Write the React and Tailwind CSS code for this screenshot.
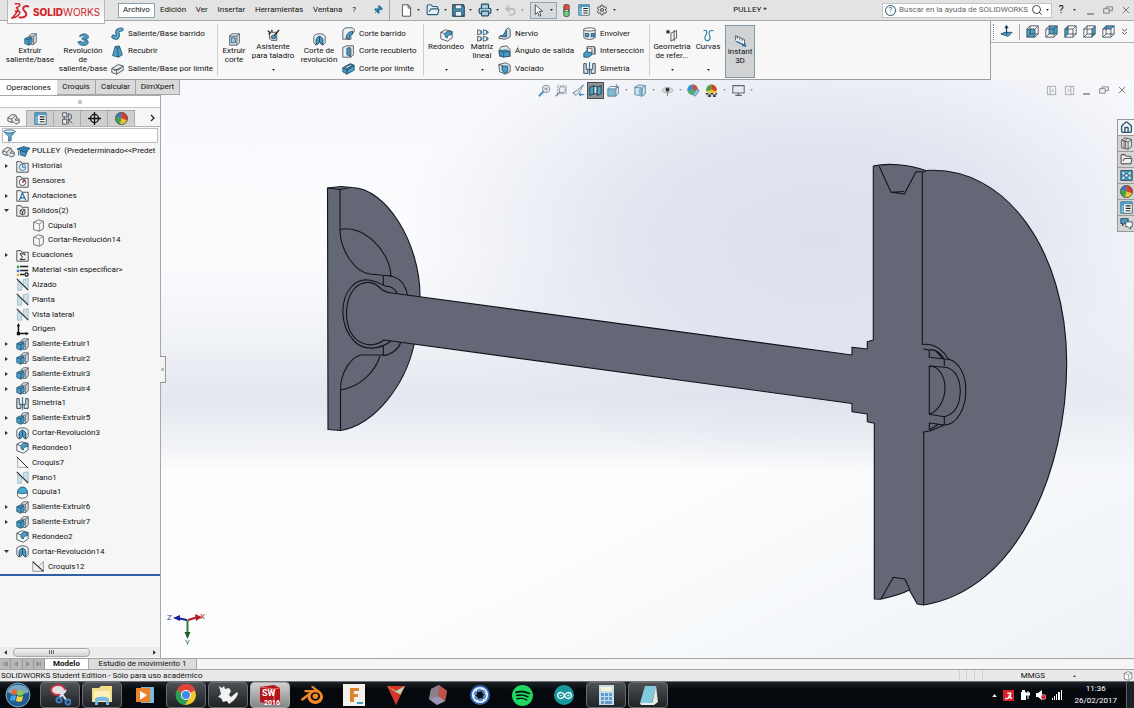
// src/App.jsx
import React, { useState } from 'react';
import { Search, Settings, Pin, Undo2, Printer, Home, FolderOpen } from 'lucide-react';
import { SiSpotify, SiArduino, SiBlender } from 'react-icons/si';

const BLUE = '#4a9dc6';
const INK = '#3b4650';

// Dibujos de 16x16 compartidos por la cinta, el árbol y las barras
const ICONS = {
  extrude: (
    <>
      <path d="M6 4l3-3h6v10l-3 3H8" fill="#eef1f3" stroke={INK} />
      <path d="M12 4v10M12 4l3-3M6 4h6" stroke={INK} fill="none" />
      <path d="M1 7l4-2 5 1v6l-4 3-5-2z" fill={BLUE} stroke="#1d4f6d" />
      <path d="M1 7l5 1 4-2M6 8v7" stroke="#1d4f6d" fill="none" />
    </>
  ),
  revolve: (
    <>
      <path d="M3 4c2-4 11-4 11 1 0 2-2 3-4 3 4 0 6 6 0 7-4 1-8-1-9-4l4-1c1 2 5 2 5 0s-4-1-4-3 3-1 3-3-4-1-5 1z" fill={BLUE} stroke="#1d4f6d" />
    </>
  ),
  sweep: (
    <>
      <path d="M3 12c5 3 6-1 5-4s1-5 5-5" fill="none" stroke="#1d4f6d" strokeWidth="5" strokeLinecap="round" />
      <path d="M3 12c5 3 6-1 5-4s1-5 5-5" fill="none" stroke="#5cabd3" strokeWidth="3" strokeLinecap="round" />
    </>
  ),
  loft: (
    <>
      <path d="M5 2l5-1 1 2 3 9-5 3-7-2z" fill={BLUE} stroke="#1d4f6d" />
      <path d="M5 2l3 2 3-1M8 4l1 11" fill="none" stroke="#1d4f6d" />
    </>
  ),
  boundary: (
    <>
      <path d="M1 8l8-5 6 2v5l-8 5-6-2z" fill="#e3e6e8" stroke={INK} />
      <path d="M1 8l6 2 8-5M7 10v5M4 11c1-3 6-1 8-3" fill="none" stroke={INK} />
    </>
  ),
  cut: (
    <>
      <path d="M2 3l3-2h9v11l-3 3H2z" fill="#e8ebed" stroke={INK} />
      <path d="M11 4v11M11 4l3-3M2 4h9" fill="none" stroke={INK} />
      <path d="M4 6h5v6H4z" fill="#9fc9de" stroke="#1d4f6d" />
    </>
  ),
  hole: (
    <>
      <path d="M3 4h9v10H5l-2-2z" fill="#dfe4e7" stroke={INK} />
      <ellipse cx="8" cy="10" rx="3" ry="2" fill={BLUE} stroke={INK} />
      <path d="M15 1l-6 7M1 2l3 3M2 6l2-1M6 1v3" stroke="#222" strokeWidth="1.6" fill="none" />
    </>
  ),
  cutRevolve: (
    <>
      <path d="M1 4c2-4 12-4 14 0v8l-3 3V8c-1-2-7-2-8 0v7l-3-3z" fill="#eef1f3" stroke={INK} />
      <path d="M4 8c1-3 2-4 4-4v7l-2 3H4zM12 8c-1-3-2-4-4-4v7l2 3h2z" fill={BLUE} stroke="#1d4f6d" />
    </>
  ),
  cutSweep: (
    <>
      <path d="M1 4l3-3h9l2 2v3l-4 3v6H1z" fill="#eef1f3" stroke={INK} />
      <path d="M5 14c0-5 3-8 8-9v4c-3 0-4 2-4 6z" fill={BLUE} stroke="#1d4f6d" />
    </>
  ),
  cutLoft: (
    <>
      <path d="M1 3l5-2h8v11l-3 3H1z" fill="#eef1f3" stroke={INK} />
      <path d="M6 4l4-1v11l-4-2z" fill={BLUE} stroke="#1d4f6d" />
      <path d="M11 4v11" stroke={INK} />
    </>
  ),
  cutBoundary: (
    <>
      <path d="M1 7l9-5 5 2v6l-9 5-5-3z" fill={BLUE} stroke="#1d4f6d" />
      <path d="M1 7l5 3 9-6M6 10v5" fill="none" stroke="#123a52" />
      <path d="M4 6l7-3 2 1-7 4z" fill="#eef1f3" stroke="#123a52" />
    </>
  ),
  fillet: (
    <>
      <path d="M1 4l6-3 8 2v8l-6 4-8-3z" fill="#f3f5f6" stroke={INK} />
      <path d="M6 7c0-3 3-5 8-4v4c-3 0-5 1-5 4-2 0-3-2-3-4z" fill={BLUE} stroke="#1d4f6d" />
      <path d="M1 4l5 2" stroke={INK} />
    </>
  ),
  pattern: (
    <g fill="#e6eef2" stroke={INK}>
      <path d="M2 1l4 1v4L2 7zM9 1l4 1v4L9 7zM2 9l4 1v4l-4 1zM9 9l4 1v4l-4 1z" />
      <path d="M6 2l1 2-1 2M13 2l2 2-2 2M6 10l1 2-1 2M13 10l2 2-2 2" fill="none" stroke="#2f7fab" strokeWidth="1.400" />
    </g>
  ),
  rib: (
    <>
      <path d="M10 3l3-2 2 2v9l-6 3-8-1 1-3 8 1z" fill="#cfdde5" stroke={INK} />
      <path d="M10 4v8l-7-1c4 0 5-4 7-7z" fill={BLUE} stroke="#1d4f6d" />
    </>
  ),
  draft: (
    <>
      <path d="M1 7l3-5 7-1 4 5v8H2z" fill="#dbe6ec" stroke={INK} />
      <path d="M2 7l8-1 4 2v6l-8 1-4-3z" fill={BLUE} stroke="#1d4f6d" />
      <path d="M2 7l5 2 7-1M7 9v6" stroke="#1d4f6d" fill="none" />
    </>
  ),
  shell: (
    <>
      <path d="M1 3l9-2 5 3v8l-6 3-7-3z" fill="#dfe8ed" stroke={INK} />
      <path d="M5 5h7v7l-4 2-3-4z" fill={BLUE} stroke="#1d4f6d" />
      <path d="M1 3l5 2" stroke={INK} />
    </>
  ),
  wrap: (
    <>
      <path d="M1 3v10c3 3 11 3 14 0V3z" fill="#e6ecef" stroke={INK} />
      <ellipse cx="8" cy="3" rx="7" ry="2" fill="#fff" stroke={INK} />
      <path d="M3 8h4v4H3zM10 8h4v4h-4z" fill={BLUE} stroke="#1d4f6d" />
    </>
  ),
  intersect: (
    <>
      <path d="M5 2h9v9H9" fill="#eef1f3" stroke={INK} />
      <path d="M5 2v5M14 2l1 2v7l-1 1" fill="none" stroke={INK} />
      <path d="M1 10l4-3 6 1v4l-4 3H1z" fill={BLUE} stroke="#1d4f6d" />
      <path d="M5 4h6v5H6z" fill="#fff" stroke={INK} />
    </>
  ),
  mirror: (
    <>
      <path d="M1 2v12h5V9H4V2zM15 2v12h-5V9h2V2z" fill="#dbe4e9" stroke={INK} strokeWidth="1.200" />
      <path d="M8 0v16" stroke="#2f7fab" strokeWidth="1.500" />
      <path d="M6 9h4" stroke={INK} />
    </>
  ),
  refGeom: (
    <>
      <path d="M6 5l7-3v9l-7 4z" fill="#eef1f3" stroke={INK} />
      <path d="M1 2h3v3H1zM10 1v14" fill="#222" stroke={INK} />
    </>
  ),
  curve: <path d="M2 2c6-2 4 4 2 7s1 6 4 5 2-4 1-7 0-6 5-5" fill="none" stroke="#2f7fab" strokeWidth="1.4" />,
  instant: (
    <>
      <path d="M2 8V2l11 5v5" fill="#fff" stroke={INK} />
      <path d="M4 3v3M7 5v3M10 6v3" stroke={INK} />
      <path d="M3 9l10 5M10 14l4 1-1-4" stroke="#256f9b" strokeWidth="1.6" fill="none" />
    </>
  ),
  file: (
    <>
      <path d="M3 1h7l3 3v11H3z" fill="#fff" stroke="#333" />
      <path d="M10 1v4h3" fill="none" stroke="#333" />
    </>
  ),
  save: (
    <>
      <path d="M1 1h13l1 2v12H1z" fill={BLUE} stroke="#1c3646" strokeWidth="1.4" />
      <path d="M4 1h8v5H4zM4 9h8v6H4z" fill="#e9eff2" stroke="#1c3646" />
    </>
  ),
  cursor: <path d="M4 1v12l3-3 2 5 2-1-2-5h4z" fill="#fff" stroke="#333" />,
  traffic: (
    <>
      <rect x="4" y="0" width="8" height="16" rx="3" fill="#5d5d5d" />
      <circle cx="8" cy="4" r="3" fill="#e64a37" />
      <circle cx="8" cy="12" r="3" fill="#5fd37e" />
      <path d="M6 8h4" stroke="#eee" />
    </>
  ),
  sheet: (
    <>
      <path d="M1 1h14v14H1z" fill="#fff" stroke="#2a4d63" />
      <path d="M1 1h14v3H1zM1 4h4v11H1z" fill={BLUE} />
      <path d="M7 6h6M7 9h6M7 12h6" stroke="#222" strokeWidth="1.4" />
      <path d="M2 7h2M2 10h2M2 13h2" stroke="#fff" />
    </>
  ),
  part: (
    <>
      <path d="M1 7l5-4 5 1 1 3 3 2v4l-4 2-3-3-2 1-5-2z" fill="#e9ebec" stroke={INK} />
      <path d="M1 7l5 2 5-5M6 9v4M12 7l-2 3 5 0" fill="none" stroke={INK} />
    </>
  ),
  cap: (
    <>
      <path d="M4 7v5l6 2 3-7" fill={BLUE} stroke="#16455f" />
      <path d="M0 5l8-3 8 2-6 5z" fill="#2f86b5" stroke="#16455f" />
      <path d="M2 7v6" stroke="#16455f" />
    </>
  ),
  config: (
    <>
      <path d="M2 1h5v5H2zM2 9h5v6H2z" fill="#e6e8ea" stroke={INK} />
      <path d="M9 2l4 2v4l-4 2M4 6v3M9 9l5 5M9 2v13" stroke={INK} fill="none" />
    </>
  ),
  target: (
    <>
      <circle cx="8" cy="8" r="5" fill="none" stroke="#111" strokeWidth="1.6" />
      <path d="M8 0v16M0 8h16" stroke="#111" strokeWidth="1.6" />
    </>
  ),
  ball: (
    <>
      <circle cx="8" cy="8" r="7.500" fill="#e8c53a" />
      <path d="M8 8V.5A7.500 7.500 0 0 0 1 6z" fill="#3a78d0" />
      <path d="M8 8V.5A7.500 7.500 0 0 1 15 10z" fill="#d93b2f" />
      <path d="M8 8L1 6a7.500 7.500 0 0 0 5 9z" fill="#3fa34d" />
      <circle cx="8" cy="8" r="7.500" fill="none" stroke="#444" />
    </>
  ),
  appearance: (
    <>
      <circle cx="7" cy="7" r="6.500" fill="#4caf6a" />
      <path d="M7 7V.5A6.500 6.500 0 0 0 1 9z" fill="#3f8fd6" />
      <path d="M7 7V.5A6.500 6.500 0 0 1 13 9z" fill="#dd4a3e" />
      <path d="M15 8l-5 7-3-2 5-7z" fill="#8fc5df" stroke="#4b7c94" />
    </>
  ),
  scene: (
    <>
      <circle cx="8" cy="7" r="6.500" fill="#e8c53a" />
      <path d="M8 7V.5A6.500 6.500 0 0 0 2 9z" fill="#3fa34d" />
      <path d="M8 7V.5A6.500 6.500 0 0 1 14 9z" fill="#d93b2f" />
      <path d="M1 11h14v5H1z" fill="#ddd" />
      <path d="M1 11h3v2H1zM7 11h3v2H7zM4 13h3v3H4zM10 13h3v3h-3zM13 11h2v2h-2z" fill="#333" />
    </>
  ),
  funnel: (
    <>
      <path d="M1 3l6 6v6l3-1V9l5-6z" fill="#67b4d8" stroke="#1f5877" />
      <ellipse cx="8" cy="3" rx="7" ry="2" fill="#dceef6" stroke="#1f5877" />
    </>
  ),
  history: (
    <>
      <path d="M1 2h5l1 2h8v11H1z" fill="#f2f3f4" stroke="#333" />
      <circle cx="8" cy="9" r="4" fill="#d4eaf5" stroke="#1f6d99" />
      <path d="M8 6v3h3" fill="none" stroke="#1f6d99" />
    </>
  ),
  sensor: (
    <>
      <path d="M1 2h5l1 2h8v11H1z" fill="#f2f3f4" stroke="#333" />
      <circle cx="8" cy="9" r="4" fill="#fff" stroke="#333" />
      <path d="M8 9l3-3" stroke="#c4282d" strokeWidth="2" />
    </>
  ),
  notes: (
    <>
      <path d="M1 2h5l1 2h8v11H1z" fill="#f2f3f4" stroke="#333" />
      <path d="M4 14L8 5l4 9M6 11h4" fill="none" stroke="#1f6d99" strokeWidth="1.500" />
    </>
  ),
  solids: (
    <>
      <path d="M1 2h5l1 2h8v11H1z" fill="#f2f3f4" stroke="#333" />
      <path d="M5 8l3-2 3 1v5l-3 1-3-1zM5 8l3 1 3-2M8 9v4" fill="#ddd" stroke="#333" />
    </>
  ),
  body: (
    <>
      <path d="M2 4l6-3 6 2v9l-5 3-7-2z" fill="#fafafa" stroke="#555" />
      <path d="M2 4l7 2 5-3M9 6v9" fill="none" stroke="#777" />
    </>
  ),
  sigma: (
    <>
      <path d="M1 2h5l1 2h8v11H1z" fill="#f2f3f4" stroke="#333" />
      <path d="M11 8V6H5l3 4-3 3h6v-1" fill="none" stroke="#222" strokeWidth="1.200" />
    </>
  ),
  material: (
    <>
      <path d="M5 3h10M5 8h10M5 13h5" stroke="#222" strokeWidth="1.800" />
      <path d="M1 2h3v3H1z" fill="#3fa34d" />
      <path d="M1 7h3v3H1z" fill="#3a78d0" />
      <path d="M1 12h3v3H1z" fill="#d8b52f" />
      <circle cx="13" cy="13" r="2" fill="#fff" stroke="#111" strokeWidth="1.500" />
    </>
  ),
  plane: (
    <>
      <path d="M2 4l5 4v7H2zM9 2l6-1v13l-6-6z" fill="#cbe0ea" stroke="#9bb9c7" />
      <path d="M1 1l14 14" stroke="#222" strokeWidth="1.300" />
    </>
  ),
  origin: (
    <>
      <path d="M3 2v11h11" fill="none" stroke="#111" strokeWidth="1.800" />
      <path d="M1 4l2-4 2 4zM12 11l4 2-4 2zM1 11h4v4H1z" fill="#111" />
    </>
  ),
  sketch: (
    <>
      <path d="M2 1v13h13" fill="none" stroke="#999" />
      <path d="M1 1l14 14" stroke="#222" strokeWidth="1.200" />
    </>
  ),
  sketchBox: (
    <>
      <path d="M1 2v12h13V2L8 8" fill="#eef0f1" stroke="#888" />
      <path d="M1 2l13 12" stroke="#222" strokeWidth="1.300" />
    </>
  ),
  dome: (
    <>
      <path d="M2 7v5c2 4 10 4 12 0V7z" fill="#fff" stroke="#333" />
      <path d="M2 8c0-9 12-9 12 0-2 2-10 2-12 0z" fill="#47a9cc" stroke="#1d4f6d" />
    </>
  ),
  zoomFit: (
    <>
      <circle cx="10" cy="6" r="4.500" fill="#e8eef2" stroke="#6b7a85" />
      <path d="M7 9l-6 6" stroke="#4d95bb" strokeWidth="2.400" />
      <path d="M8 6h4M10 4v4" stroke="#6b7a85" />
    </>
  ),
  zoomArea: (
    <>
      <path d="M3 2h11v10H3z" fill="none" stroke="#8b979f" strokeDasharray="2 1" />
      <circle cx="9" cy="7" r="4" fill="#e8eef2" stroke="#6b7a85" />
      <path d="M6 10l-5 5" stroke="#8b979f" strokeWidth="2" />
    </>
  ),
  prevView: (
    <>
      <path d="M14 1L6 8l-5 3 4 3 4-4z" fill="#dfe9ee" stroke="#66757f" />
      <path d="M9 13h6M11 11l-2 2 2 2" fill="none" stroke="#4d95bb" strokeWidth="1.500" />
    </>
  ),
  section: (
    <>
      <path d="M1 4l5-2v10l-5 2z" fill="#52a5cd" stroke="#12313f" />
      <path d="M6 3h4v9H6z" fill="#dce6ea" stroke="#12313f" />
      <path d="M10 4l5-2v10l-5 2z" fill="#52a5cd" stroke="#12313f" />
    </>
  ),
  cube: (
    <>
      <path d="M1 4l5-3 8 1v10l-4 3-9-2z" fill="#c9e2ee" stroke="#5b7b8c" />
      <path d="M6 6l4-1v10l-4-1z" fill="#7db8d4" />
      <path d="M1 4l9 1 4-3M10 5v10" fill="none" stroke="#5b7b8c" />
    </>
  ),
  orient: (
    <>
      <path d="M1 6h10v9H1z" fill="#7fb9d5" stroke="#547889" />
      <path d="M1 6l3-3h8M11 6l3-3v9l-3 3M12 0v5M10 3l2 2 3-2" fill="none" stroke="#547889" />
    </>
  ),
  eye: (
    <>
      <path d="M1 8c4-5 10-5 14 0-4 4-10 4-14 0z" fill="#e4e4e4" stroke="#999" />
      <circle cx="8" cy="7" r="2.500" fill="#333" />
      <path d="M8 10v5" stroke="#777" />
    </>
  ),
  screen: (
    <>
      <path d="M1 2h14v9H1z" fill="#e3ecf0" stroke="#666" strokeWidth="1.300" />
      <path d="M8 11v3M4 14h8" stroke="#666" strokeWidth="1.500" />
    </>
  ),
  normal: (
    <>
      <path d="M1 11l5-2h9l-5 5z" fill={BLUE} stroke="#1d4f6d" />
      <path d="M8 11V2M6 4l2-3 2 3" fill="none" stroke="#123a52" strokeWidth="1.400" />
    </>
  ),
  books: (
    <>
      <path d="M2 4l4-3 8 2v9l-4 3-8-2z" fill="#e7e7e7" stroke="#444" />
      <path d="M2 4l8 2 4-3M10 6v9M5 5v9M7 5v9M9 2L5 5" fill="none" stroke="#444" />
    </>
  ),
  views: (
    <>
      <path d="M1 2h14v12H1z" fill={BLUE} stroke="#234" />
      <path d="M3 4l3 3M13 4l-3 3M3 12l3-3M13 12l-3-3" stroke="#fff" strokeWidth="1.500" />
      <path d="M6 6h4v4H6z" fill="#fff" stroke="#234" />
    </>
  ),
  chat: (
    <>
      <path d="M1 2h9v6H5l-2 3V8H1z" fill={BLUE} stroke="#234" />
      <path d="M7 6h8v6h-2v3l-3-3H7z" fill="#fff" stroke="#345" />
    </>
  ),
  left: <path d="M2 2h12v12H2zM6 2v12M11 6L8 8l3 2" fill="none" stroke="#8a8d92" />,
  right: <path d="M2 2h12v12H2zM10 2v12M5 6l3 2-3 2" fill="none" stroke="#8a8d92" />,
  min: <path d="M3 13h10" fill="none" stroke="#777" strokeWidth="2" />,
  restore: <path d="M1 6h9v7H1zM5 6V3h10v6h-5" fill="none" stroke="#666" strokeWidth="1.200" />,
  close: <path d="M3 3l10 10M13 3L3 13" fill="none" stroke="#666" strokeWidth="1.300" />,
};

const CUBE_FACES = {
  frontal: 'M1 5h10v10H1z',
  posterior: 'M5 1h10v10H5z',
  izquierda: 'M1 5l4-4v10l-4 4z',
  derecha: 'M11 5l4-4v10l-4 4z',
  superior: 'M1 5l4-4h10l-4 4z',
};

const Icon = ({ name, className = 'size-[13px]' }) => (
  <svg viewBox="0 0 16 16" className={`shrink-0 ${className}`} aria-hidden="true">{ICONS[name]}</svg>
);

const Caret = ({ light }) => (
  <svg viewBox="0 0 4 3" className="h-[2px] w-[3px] shrink-0" aria-hidden="true">
    <path d="M0 0h4L2 3z" fill={light ? '#9a9a9a' : '#222'} />
  </svg>
);

const MENU = ['Edición', 'Ver', 'Insertar', 'Herramientas', 'Ventana', '?'];

const QUICK = [
  { label: 'Nuevo', icon: <Icon name="file" /> },
  { label: 'Abrir', icon: <FolderOpen className="size-[14px] text-[#2c5e7a]" fill="#e4eef3" strokeWidth={2} /> },
  { label: 'Guardar', icon: <Icon name="save" /> },
  { label: 'Imprimir', icon: <Printer className="size-[14px] text-[#234a61]" fill="#a8cfe2" strokeWidth={2} /> },
  { label: 'Deshacer', icon: <Undo2 className="size-[13px] text-[#b9bbbd]" strokeWidth={3} />, light: true },
];

const WindowButtons = ({ className = '' }) => (
  <div className={`flex items-center ${className}`}>
    <button type="button" aria-label="Minimizar" className="flex w-[17px] justify-center"><Icon name="min" className="size-[11px]" /></button>
    <button type="button" aria-label="Restaurar" className="flex w-[18px] justify-center"><Icon name="restore" className="size-[10px]" /></button>
    <button type="button" aria-label="Cerrar" className="flex w-[17px] justify-center"><Icon name="close" className="size-[10px]" /></button>
  </div>
);

const TitleBar = () => (
  <header className="relative flex h-[21px] shrink-0 items-center border-b border-[#a9a9a9] bg-[#e3e3e3] pl-[118px]">
    {/* El logo cuelga por encima de la cinta */}
    <div className="absolute left-[7px] top-0 z-10 flex h-6 w-[98px] items-center border border-t-0 border-[#b5b5b5] bg-linear-to-b from-[#e9e9e9] to-white pl-[3px]">
      <svg viewBox="0 0 20 18" className="h-[17px] w-[19px] shrink-0" fill="none" stroke="#d2232a" strokeWidth="1.6" aria-label="DS">
        <path d="M4 1c4-1 6 0 5 2-1 1-3 2-4 2 4 0 2 5-4 11 6-1 9-5 8-7-1-1-3-1-5 0" />
        <path d="M19 4c-3-2-7 0-6 3 1 2 4 3 3 6-1 2-5 3-8 2" strokeWidth="2" />
      </svg>
      <span className="ml-[3px] font-[Inter,sans-serif] text-[10px] text-[#d2232a]"><b className="font-extrabold">SOLID</b><span>WORKS</span></span>
    </div>
    <button type="button" className="h-[15px] w-[37px] border border-[#8ba3ae] bg-white">Archivo</button>
    <nav className="flex w-[206px] shrink-0 items-center justify-between px-[5px]">
      {MENU.map(item => <button key={item} type="button">{item}</button>)}
    </nav>
    <button type="button" aria-label="Fijar menú" className="ml-3"><Pin className="size-[10px] rotate-45 text-[#2f7ba3]" fill="#2f7ba3" /></button>
    <div className="ml-[6px] h-5 w-px bg-[#a4a4a4]" />
    <div className="flex items-center pl-[10px]">
      {QUICK.map(q => (
        <button key={q.label} type="button" aria-label={q.label} className="flex w-[26px] items-center gap-1">
          {q.icon}
          <Caret light={q.light} />
        </button>
      ))}
      <button type="button" aria-label="Seleccionar" className="flex h-[17px] w-[27px] items-center gap-[5px] border border-[#95a5ad] bg-[#d5dbde] pl-px">
        <Icon name="cursor" />
        <Caret />
      </button>
      <button type="button" aria-label="Reconstruir" className="flex w-[18px] justify-center"><Icon name="traffic" /></button>
      <button type="button" aria-label="Propiedades" className="flex w-[17px] justify-center"><Icon name="sheet" className="size-3" /></button>
      <button type="button" aria-label="Opciones" className="flex w-[26px] items-center gap-[5px] pl-1"><Settings className="size-3 text-[#444]" /><Caret /></button>
    </div>
    <h1 className="flex-1 text-center">PULLEY *</h1>
    <div className="flex h-[15px] w-[170px] items-center gap-[3px] border border-[#c4c4c4] bg-white px-[2px]">
      <span className="flex size-[11px] shrink-0 items-center justify-center rounded-full border border-[#28556e] text-[#28556e]">?</span>
      <input type="text" aria-label="Buscar en la ayuda" placeholder="Buscar en la ayuda de SOLIDWORKS" className="w-0 flex-1 outline-none placeholder:text-[#666]" />
      <Search className="size-3 shrink-0 text-[#444]" />
      <Caret />
    </div>
    <button type="button" aria-label="Ayuda" className="flex w-[30px] items-center justify-center gap-[9px] text-[11px]">?<Caret /></button>
    <WindowButtons />
  </header>
);

const BigButton = ({ icon, lines, caret, width, top }) => (
  <button type="button" className={`flex h-full flex-col items-center whitespace-nowrap ${width} ${top ? 'pt-2' : 'pt-3'}`}>
    <Icon name={icon} />
    {lines.map(line => <span key={line} className="leading-[9px]">{line}</span>)}
    {caret && <span className="mt-auto flex pb-2"><Caret /></span>}
  </button>
);

const ToolList = ({ items, className }) => (
  <div className={`flex flex-col justify-between pb-1 pt-[6px] ${className}`}>
    {items.map(([icon, label]) => (
      <button key={label} type="button" className="flex items-center gap-1 whitespace-nowrap">
        <Icon name={icon} />
        {label}
      </button>
    ))}
  </div>
);

const Divider = () => <div className="my-[3px] w-px shrink-0 bg-[#cfcfcf]" />;

const Ribbon = () => (
  <div className="flex h-[59px] shrink-0 bg-[#f7f7f7]">
    <div className="flex flex-1 border-b border-r border-[#9d9d9d]">
      <BigButton icon="extrude" width="w-[60px]" lines={['Extruir', 'saliente/base']} />
      <BigButton icon="revolve" width="w-[46px]" lines={['Revolución', 'de', 'saliente/base']} />
      <ToolList className="w-[111px] pl-[5px]" items={[['sweep', 'Saliente/Base barrido'], ['loft', 'Recubrir'], ['boundary', 'Saliente/Base por límite']]} />
      <Divider />
      <BigButton icon="cut" width="w-8" lines={['Extruir', 'corte']} />
      <BigButton icon="hole" width="w-[46px]" lines={['Asistente', 'para taladro']} caret top />
      <BigButton icon="cutRevolve" width="w-[46px]" lines={['Corte de', 'revolución']} />
      <ToolList className="w-[81px]" items={[['cutSweep', 'Corte barrido'], ['cutLoft', 'Corte recubierto'], ['cutBoundary', 'Corte por límite']]} />
      <Divider />
      <BigButton icon="fillet" width="w-11" lines={['Redondeo']} caret top />
      <BigButton icon="pattern" width="w-7" lines={['Matriz', 'lineal']} caret top />
      <ToolList className="w-[87px] pl-[2px]" items={[['rib', 'Nervio'], ['draft', 'Ángulo de salida'], ['shell', 'Vaciado']]} />
      <ToolList className="w-[66px]" items={[['wrap', 'Envolver'], ['intersect', 'Intersección'], ['mirror', 'Simetría']]} />
      <Divider />
      <BigButton icon="refGeom" width="w-11" lines={['Geometría', 'de refer...']} caret top />
      <BigButton icon="curve" width="w-7" lines={['Curvas']} caret top />
      <div className="mb-px ml-[3px] mt-1 border border-[#7f99a6] bg-[#d0d2d4]">
        <BigButton icon="instant" width="w-7" lines={['Instant', '3D']} top />
      </div>
    </div>
    <div className="w-[143px]">
      <div className="flex h-[22px] items-center justify-between border-b border-[#b3b3b3] pl-[2px] pr-[6px]">
        <div className="h-4 border-l border-dotted border-[#888]" />
        <button type="button" aria-label="Normal a"><Icon name="normal" /></button>
        <div className="h-4 w-px bg-[#aaa]" />
        {Object.entries(CUBE_FACES).map(([name, face]) => (
          <button key={name} type="button" aria-label={`Vista ${name}`}>
            <svg viewBox="0 0 16 16" className="size-[13px]" aria-hidden="true">
              <path d={face} fill={BLUE} />
              <path d="M1 5h10v10H1zM5 1h10v10H5zM1 5l4-4M11 5l4-4M1 15l4-4M11 15l4-4" fill="none" stroke="#3b4b55" />
            </svg>
          </button>
        ))}
        <button type="button" aria-label="Más vistas">
          <svg viewBox="0 0 8 10" className="h-2 w-[7px]" fill="none" stroke="#333"><path d="M1 1l3 3 3-3M1 5l3 3 3-3" /></svg>
        </button>
      </div>
    </div>
  </div>
);

const HEADS_UP = [
  ['zoomFit', 'Zoom para ajustar'],
  ['zoomArea', 'Zoom encuadre'],
  ['prevView', 'Vista previa'],
  ['section', 'Vista de sección', 'active'],
  ['orient', 'Orientación de vista', 'caret'],
  ['cube', 'Estilo de visualización', 'caret'],
  ['eye', 'Ocultar o mostrar elementos', 'caret'],
  ['appearance', 'Editar apariencia'],
  ['scene', 'Aplicar escena', 'caret'],
  ['screen', 'Configuración de visualización', 'caret'],
];

const CommandTabs = () => {
  const [active, setActive] = useState('Operaciones');
  const tabs = [['Operaciones', 'w-[57px]'], ['Croquis', 'w-[39px]'], ['Calcular', 'w-10'], ['DimXpert', 'w-11']];

  return (
    <div className="flex h-[15px] shrink-0 items-stretch">
      <div className="flex bg-white">
        {tabs.map(([name, width]) => (
          <button
            key={name}
            type="button"
            onClick={() => setActive(name)}
            className={`${width} ${active === name ? 'bg-white' : 'border-b border-r border-[#a5a5a5] bg-[#d9d9d9]'}`}
          >
            {name}
          </button>
        ))}
      </div>
      <div className="flex h-5 flex-1 items-center justify-center pl-[70px]">
        {HEADS_UP.map(([icon, label, mode]) => (
          <button
            key={label}
            type="button"
            aria-label={label}
            className={`flex h-[17px] items-center justify-center gap-[5px] ${mode === 'caret' ? 'w-[27px]' : 'w-[17px]'} ${mode === 'active' ? 'border border-[#4a4e52] bg-[#8d9194]' : ''}`}
          >
            <Icon name={icon} />
            {mode === 'caret' && <Caret light />}
          </button>
        ))}
      </div>
      <div className="flex h-5 items-center">
        <button type="button" aria-label="Panel izquierdo" className="flex w-[18px] justify-center"><Icon name="left" className="size-[11px]" /></button>
        <button type="button" aria-label="Panel derecho" className="flex w-[18px] justify-center"><Icon name="right" className="size-[11px]" /></button>
        <WindowButtons className="pr-1" />
      </div>
    </div>
  );
};

const TREE = [
  ['history', 'Historial', 'closed'],
  ['sensor', 'Sensores'],
  ['notes', 'Anotaciones', 'closed'],
  ['solids', 'Sólidos(2)', 'open'],
  ['body', 'Cúpula1', '', true],
  ['body', 'Cortar-Revolución14', '', true],
  ['sigma', 'Ecuaciones', 'closed'],
  ['material', 'Material <sin especificar>'],
  ['plane', 'Alzado'],
  ['plane', 'Planta'],
  ['plane', 'Vista lateral'],
  ['origin', 'Origen'],
  ['extrude', 'Saliente-Extruir1', 'closed'],
  ['extrude', 'Saliente-Extruir2', 'closed'],
  ['extrude', 'Saliente-Extruir3', 'closed'],
  ['extrude', 'Saliente-Extruir4', 'closed'],
  ['mirror', 'Simetría1'],
  ['extrude', 'Saliente-Extruir5', 'closed'],
  ['cutRevolve', 'Cortar-Revolución3', 'closed'],
  ['fillet', 'Redondeo1'],
  ['sketch', 'Croquis7'],
  ['plane', 'Plano1'],
  ['dome', 'Cúpula1'],
  ['extrude', 'Saliente-Extruir6', 'closed'],
  ['extrude', 'Saliente-Extruir7', 'closed'],
  ['fillet', 'Redondeo2'],
  ['cutRevolve', 'Cortar-Revolución14', 'open'],
  ['sketchBox', 'Croquis12', '', true],
];

const PANEL_TABS = [['part', 'Árbol de operaciones'], ['sheet', 'Propiedades'], ['config', 'Configuraciones'], ['target', 'DimXpert'], ['ball', 'Apariencias']];

const FeatureTree = () => (
  <aside className="relative flex w-[161px] shrink-0 flex-col border-r border-t border-[#a8a8a8] bg-[#f6f6f7]">
    <div className="flex h-3 items-center justify-center border-b border-[#c9c9c9] bg-white">
      <span className="size-1 rounded-full border border-[#999]" />
    </div>
    <div className="mt-[2px] flex h-[17px] shrink-0 items-stretch border-b border-[#b3b3b3]">
      {PANEL_TABS.map(([icon, label], i) => (
        <button key={label} type="button" aria-label={label} className={`flex w-[27px] items-center justify-center border-r border-[#aaa] ${i === 0 ? '' : 'border-t bg-[#cfcfcf]'}`}>
          <Icon name={icon} />
        </button>
      ))}
      <button type="button" aria-label="Más" className="flex flex-1 items-center justify-end pr-1">
        <svg viewBox="0 0 6 8" className="h-2 w-[6px]" fill="none" stroke="#222" strokeWidth="1.3"><path d="M1 1l3 3-3 3" /></svg>
      </button>
    </div>
    <label className="mx-[2px] mt-px flex h-[15px] shrink-0 items-center border border-[#bdbdbd] bg-white">
      <Icon name="funnel" />
      <input type="text" aria-label="Filtro" className="w-0 flex-1 outline-none" />
    </label>
    <ul className="mt-px grid h-[432px] shrink-0 auto-rows-fr border-b-2 border-[#2f5fa5]">
      <li className="flex items-center gap-[2px] whitespace-nowrap pl-[2px]">
        <Icon name="part" />
        <Icon name="cap" />
        <span className="whitespace-pre">PULLEY  (Predeterminado&lt;&lt;Predet</span>
      </li>
      {TREE.map(([icon, label, state, child], i) => (
        <li key={i} className={`flex items-center gap-[3px] whitespace-nowrap ${child ? 'pl-8' : 'pl-1'}`}>
          {!child && (
            <svg viewBox="0 0 6 6" className="mr-[3px] size-[6px] shrink-0" fill="#333" aria-hidden="true">
              {state === 'closed' && <path d="M1 1l3 2-3 2z" />}
              {state === 'open' && <path d="M0 1h5L2.500 4z" />}
            </svg>
          )}
          <Icon name={icon} />
          <span>{label}</span>
        </li>
      ))}
    </ul>
    <div className="mb-px mt-auto flex h-[10px] items-center justify-between bg-[#ececec] px-1">
      <svg viewBox="0 0 4 6" className="h-[5px] w-[3px]" fill="#333"><path d="M4 0v6L0 3z" /></svg>
      <div className="ml-1 flex h-[9px] w-[77px] items-center justify-center gap-px rounded-sm border border-[#a9a9a9] bg-linear-to-b from-[#f4f4f4] to-[#d2d2d2]">
        <i className="h-1 w-px bg-[#666]" /><i className="h-1 w-px bg-[#666]" /><i className="h-1 w-px bg-[#666]" />
      </div>
      <svg viewBox="0 0 4 6" className="ml-[62px] h-[5px] w-[3px]" fill="#333"><path d="M0 0v6l4-3z" /></svg>
    </div>
    <button type="button" aria-label="Ocultar panel" className="absolute left-full top-[260px] flex h-[27px] w-[6px] items-center justify-center border border-l-0 border-[#999] bg-[#f3f3f3]">
      <span className="size-[3px] rounded-full border border-[#888]" />
    </button>
  </aside>
);

const Model = () => (
  <svg viewBox="0 80 1134 578" preserveAspectRatio="xMidYMid slice" className="absolute inset-0 size-full" role="img" aria-label="Sección de la polea">
    <defs>
      <linearGradient id="sky" x1="0" y1="0" x2="0" y2="1">
        <stop offset="0" stopColor="#f8f9fd" />
        <stop offset=".3" stopColor="#fcfcfe" />
        <stop offset=".42" stopColor="#f3f5f9" />
        <stop offset=".55" stopColor="#e4e7ef" />
        <stop offset=".63" stopColor="#f0f2f6" />
        <stop offset=".68" stopColor="#fdfdfd" />
        <stop offset="1" stopColor="#fcfdfd" />
      </linearGradient>
      <radialGradient id="haze" cx="0" cy="0" r="1" gradientUnits="userSpaceOnUse" gradientTransform="translate(820 240) scale(420 230)">
        <stop offset="0" stopColor="#dbe0ec" />
        <stop offset=".45" stopColor="#dbe0ec" stopOpacity=".8" />
        <stop offset="1" stopColor="#dbe0ec" stopOpacity="0" />
      </radialGradient>
      <linearGradient id="corner" x1="0" y1="0" x2="1" y2="1">
        <stop offset=".65" stopColor="#eef2f8" stopOpacity="0" />
        <stop offset="1" stopColor="#eef2f7" />
      </linearGradient>
    </defs>
    <rect x="0" y="80" width="1134" height="578" fill="url(#sky)" />
    <rect x="0" y="80" width="1134" height="578" fill="url(#haze)" />
    <rect x="0" y="80" width="1134" height="578" fill="url(#corner)" />

    <g fill="#646876" stroke="#12141c" strokeWidth="1.1" strokeLinejoin="round">
      {/* disco pequeño */}
      <path d="M327.500 188L341 186.500L352 187.500C386 188 420 243 420 296L414 345C405 385 375 425 340.500 430.500L328 429.500Z" />
      <path d="M327.500 188L340 189.500L350 187.500M340 189.500V232C341 250 354 272 370 274L391 276C390 250 362 224 340 229.500" />
      <path d="M383.300 275.500V287M388 275.500C400 277 406 285 407.500 296" fill="none" />
      <path d="M340.500 390V430M340.500 390C340 374 352 352 366 355H383M380 356C375 372 360 387 340.500 390M383.300 345V355.500C391 355 398 350 401 342" />
      <path d="M391 341C381 349 365 352 354 341C340 326 339 300 352 286C362 276 374 280 385 286C392 286 395 289 397 293" />
      {/* eje y disco grande en una sola silueta */}
      <path d="M390 292.700L852 355V347.300L867.300 349V341.700L873.300 340V166C887 163 908 164 926 170.500C1005 165 1066.700 250 1066.700 363C1066.700 470 1018 590 923.500 605L917.300 604L909.300 590C900 595 890 597 880 599.300L874.300 599V423.300L867.300 421.700V414L852 411.700V403.500L384 340C370 350 356 343 350 331C344 317 346 299 354 289C363 279 374 282 379 287Q384 292 390 292.700Z" />
      <path d="M879.300 166.500L891 192.300L904.300 194L916 171.700H926M891 192.300L904 191.500M922.300 171.700V344.500M923.700 431.500V605" fill="none" />
      <path d="M881 599L893.300 577.300L905 579L910 590" fill="none" />
      {/* cubo */}
      <path d="M922.300 344.500C934 343 943 350 949 360M923.300 349L929.300 350V357.300L944.300 359V366M929.300 350C936 349 941 354 944 359M935 350L942 358" fill="none" />
      <path d="M944.300 359C957 358 966 373 965.700 390C966 408 957 425 944.300 425L929.300 423V430M923.700 432L930 431L944.300 425M944.300 425V416.500M929.300 430L939 424" fill="none" />
      <path d="M929.300 366L947 367.500C957 371 960 381 960.300 391C960 404 955 414 944.300 416.700L929.300 414.300Z" />
      <path d="M929.300 366C940 366 945 378 945 388C945 399 939 411 929.300 414.300" fill="none" />
    </g>

    {/* triada de ejes */}
    <g strokeWidth="2">
      <path d="M187 620L177 618" stroke="#1a1f9c" /><path d="M180 615l-7 3 7 3z" fill="#1a1f9c" />
      <path d="M188 620L198 617" stroke="#b21f2b" /><path d="M195 614l7 3-6 4z" fill="#b21f2b" />
      <path d="M187.500 620V634" stroke="#2c7d35" /><path d="M184.500 632h6l-3 7z" fill="#1f5e28" />
    </g>
    <g className="font-[Roboto,sans-serif] text-[8px]">
      <text x="167" y="620" fill="#3339a8">Z</text>
      <text x="200" y="619" fill="#b21f2b">X</text>
      <text x="185" y="645" fill="#39713f">Y</text>
    </g>
  </svg>
);

const TaskPane = () => (
  <div className="ml-auto mt-6 flex w-[17px] flex-col self-start border-l border-t border-[#999]">
    <button type="button" aria-label="Inicio" className="flex h-4 items-center justify-center border-b border-[#999] bg-[#f4f4f4]"><Home className="size-[13px] text-[#24566f]" strokeWidth={2.500} /></button>
    <button type="button" aria-label="Biblioteca" className="flex h-4 items-center justify-center border-b border-[#999] bg-[#d4d4d4]"><Icon name="books" /></button>
    <button type="button" aria-label="Explorador" className="flex h-4 items-center justify-center border-b border-[#999] bg-[#d4d4d4]"><FolderOpen className="size-[13px] text-[#555]" fill="#eee" /></button>
    {[['views', 'Paleta de vistas'], ['ball', 'Apariencias'], ['sheet', 'Propiedades'], ['chat', 'Foro']].map(([icon, label]) => (
      <button key={label} type="button" aria-label={label} className="flex h-4 items-center justify-center border-b border-[#999] bg-[#d4d4d4]"><Icon name={icon} /></button>
    ))}
  </div>
);

const ModelTabs = () => (
  <div className="flex h-3 shrink-0 items-stretch border-y border-[#a3a3a3] bg-[#f5f5f5]">
    <div className="flex w-[45px] items-stretch">
      {['M7 1L3 4l4 3zM2 1v6', 'M6 1L2 4l4 3z', 'M2 1l4 3-4 3z', 'M1 1l4 3-4 3zM6 1v6'].map(d => (
        <button key={d} type="button" aria-label="Desplazar pestañas" className="flex flex-1 items-center justify-center border-r border-[#999] bg-[#b9b9b9]">
          <svg viewBox="0 0 8 8" className="size-[6px]" fill="#999" stroke="#888"><path d={d} /></svg>
        </button>
      ))}
    </div>
    <button type="button" className="w-[43px] bg-white font-bold leading-[10px]">Modelo</button>
    <button type="button" className="w-[109px] border-x border-[#aaa] bg-[#dcdcdc] leading-[10px]">Estudio de movimiento 1</button>
  </div>
);

const StatusBar = () => (
  <footer className="flex h-[11px] shrink-0 items-center bg-[#e9e9e9] pl-px pr-px leading-[11px]">
    <span>SOLIDWORKS Student Edition - Sólo para uso académico</span>
    <div className="ml-auto mr-[38px] flex h-full w-6 justify-between">
      <i className="w-px bg-[#d3d3d3]" /><i className="w-px bg-[#d3d3d3]" /><i className="w-px bg-[#d3d3d3]" /><i className="w-px bg-[#d3d3d3]" />
    </div>
    <span>MMGS</span>
    <svg viewBox="0 0 4 3" className="ml-7 mr-[47px] h-[2px] w-[3px]" fill="#333"><path d="M0 3h4L2 0z" /></svg>
    <Icon name="body" className="size-[10px]" />
  </footer>
);

const APPS = [
  { name: 'Recortes', open: true, art: <><ellipse cx="9" cy="6" rx="7" ry="5" fill="#e9dfe2" stroke="#c6344a" strokeWidth="2" /><path d="M10 6l8 11M17 6l-7 8" stroke="#dfe6ee" strokeWidth="2" /><circle cx="10" cy="16" r="2.500" fill="none" stroke="#3d7fc4" strokeWidth="2" /><circle cx="19" cy="18" r="2.500" fill="none" stroke="#3d7fc4" strokeWidth="2" /></> },
  { name: 'Explorador', open: true, art: <><path d="M1 4h7l2-2h11v16H1z" fill="#f3dd8c" /><path d="M3 7h16v11H3z" fill="#fbf0bb" /><path d="M4 21v-6c0-3 14-3 14 0v6h-3v-4H7v4z" fill="#78b9e4" /></> },
  { name: 'Reproductor', art: <><path d="M8 3h13v16H8z" fill="#7db8dc" /><path d="M3 4h14v14H3z" fill="#e9822b" /><path d="M7 7l7 4-7 5z" fill="#fff" /></> },
  { name: 'Chrome', open: true, art: <><circle cx="11" cy="11" r="10" fill="#f3c72d" /><path d="M11 11L2 6a10 10 0 0 1 18.500 0z" fill="#dc4437" /><path d="M11 11L2 6a10 10 0 0 0 8 15l5-8z" fill="#2b9f58" /><circle cx="11" cy="11" r="5" fill="#fff" /><circle cx="11" cy="11" r="4" fill="#4587ee" /></> },
  { name: 'Rhinoceros', open: true, art: <path d="M2 2l3 2 2-2 1 3 4-1 2 3-2 4 2 2 6-5 1 2c-2 5-6 8-9 10l-2-3-4 1-2-4-3-1 3-3z" fill="#f2f2f2" /> },
  { name: 'SOLIDWORKS 2016', active: true, art: <><path d="M1 3l14-2 6 3v15l-6 2-14-3z" fill="#b3141b" /><path d="M1 3l14 2 6-1M15 5v16" stroke="#e66" fill="none" /><text x="3" y="12" fontSize="9" fontWeight="700" fill="#fff">SW</text><text x="5" y="21" fontSize="7" fontWeight="700" fill="#fff">2016</text></> },
  { name: 'Blender', node: <SiBlender className="size-[22px] text-[#f0872a]" /> },
  { name: 'Fusion 360', art: <><path d="M0 0h22v22H0z" fill="#f4f0ea" /><path d="M7 18V4h9v3h-5v3h4v3h-4v5z" fill="#dd8431" /><path d="M14 18h6v2h-6z" fill="#3aa4bd" /></> },
  { name: 'Vectary', art: <><path d="M2 2h18l-9 19z" fill="#d5372b" /><path d="M2 2l9 5 9-5-5 9z" fill="#b7d8b4" /><path d="M9 8l6 2-4 11z" fill="#d5372b" /></> },
  { name: 'Modelador', art: <><path d="M4 5l8-4 8 6-2 10-8 4-8-6z" fill="#7a6b80" /><path d="M12 1l8 6-2 10-7-5z" fill="#c05347" /><path d="M2 15l9-3 7 5-8 4z" fill="#9d93b4" /><path d="M4 5l8-4-1 11-9 3z" fill="#8c8090" /></> },
  { name: 'Cámara', art: <><circle cx="11" cy="11" r="9" fill="#fff" stroke="#2f6cb8" strokeWidth="2" /><circle cx="11" cy="11" r="5" fill="#0b111a" stroke="#5b93d2" strokeWidth="3" strokeDasharray="4 1" /></> },
  { name: 'Spotify', node: <SiSpotify className="size-[21px] text-[#1ed760]" /> },
  { name: 'Arduino', node: <span className="flex size-5 items-center justify-center rounded-full bg-[#17979e]"><SiArduino className="size-[15px] text-white" /></span> },
  { name: 'Calculadora', open: true, art: <><path d="M4 1h15v20H4z" fill="#c5dcee" /><path d="M6 3h11v4H6z" fill="#f7f3d7" /><path d="M6 9h3v3H6zM10 9h3v3h-3zM14 9h3v3h-3zM6 13h3v3H6zM10 13h3v3h-3zM14 13h3v3h-3zM6 17h3v3H6zM10 17h7v3h-7z" fill="#5f9ccc" /></> },
  { name: 'Bloc de notas', open: true, art: <><path d="M8 2h11l-4 17H3z" fill="#83cbdc" /><path d="M19 2l2 16-6 2z" fill="#e7ebdf" /><path d="M3 19h12l6-1-4 3H4z" fill="#e9efec" /></> },
];

const Taskbar = () => (
  <div className="flex h-[27px] shrink-0 items-center border-t border-[#6b7176] bg-linear-to-b from-[#1d2227] to-[#05090e] to-30% text-white">
    <button type="button" aria-label="Inicio" className="ml-[5px] mr-[9px]">
      <svg viewBox="0 0 26 26" className="size-[26px]">
        <circle cx="13" cy="13" r="12" fill="#245e8d" stroke="#7ba7c3" />
        <path d="M2 10a12 12 0 0 1 22 0c-7 3-15 3-22 0z" fill="#9cc4da" opacity=".7" />
        <path d="M7 8c2-1 4-1 5 0l-1 5c-2-1-4-1-5 0z" fill="#ec6533" /><path d="M13 8c2 1 4 1 6 0l-1 5c-2 1-4 1-6 0z" fill="#8fc84a" />
        <path d="M6 14c2-1 4-1 5 0l-1 5c-2-1-3-1-5 0z" fill="#3eaae2" /><path d="M12 14c2 1 4 1 6 0l-1 5c-2 1-4 1-6 0z" fill="#f9cf3d" />
      </svg>
    </button>
    <div className="flex h-full gap-[2px]">
      {APPS.map(app => (
        <button
          key={app.name}
          type="button"
          aria-label={app.name}
          className={`flex w-10 items-center justify-center ${app.active ? 'rounded-sm border border-[#aaa] bg-linear-to-b from-[#d2d2d2] to-[#858585]' : app.open ? 'rounded-sm border border-[#686c70] bg-linear-to-b from-[#4d5154] to-[#1f2326]' : ''}`}
        >
          {app.node || <svg viewBox="0 0 22 22" className="size-[22px]" aria-hidden="true">{app.art}</svg>}
        </button>
      ))}
    </div>
    <div className="ml-auto flex items-center gap-[6px]">
      <svg viewBox="0 0 6 4" className="h-[3px] w-[5px]" fill="#fff"><path d="M0 4h6L3 0z" /></svg>
      <svg viewBox="0 0 10 10" className="size-[11px]"><path d="M0 0h10v10H0z" fill="#d8202c" /><path d="M2 8c3 0 5-2 5-5H4M5 5l3 3" fill="none" stroke="#fff" strokeWidth="1.300" /></svg>
      <svg viewBox="0 0 10 10" className="size-[10px]"><path d="M1 2h5v8H1zM2 0h3v2H2z" fill="#fff" /><path d="M8 1v8M6 3h4v2H6z" stroke="#fff" fill="#fff" /></svg>
      <svg viewBox="0 0 10 10" className="size-[10px]"><path d="M0 3h2l4-3v10L2 7H0z" fill="#fff" /><circle cx="7.500" cy="7" r="2.500" fill="#d8202c" stroke="#fff" strokeWidth=".5" /></svg>
      <svg viewBox="0 0 10 10" className="size-[10px]" fill="#fff"><path d="M0 8h1v2H0zM2 6h1v4H2zM4 4h1v6H4zM6 2h2v8H6zM9 0h1v10H9z" /></svg>
    </div>
    <div className="ml-3 mr-[9px] text-center leading-[12px]">
      <div>11:36</div>
      <div>26/02/2017</div>
    </div>
    <button type="button" aria-label="Mostrar escritorio" className="h-full w-2 border-l border-[#5d6368] bg-[#1b2126]" />
  </div>
);

const App = () => (
  <div className="flex h-screen flex-col overflow-hidden bg-white font-[Roboto,sans-serif] text-[8px] leading-[10px] text-[#111]">
    <TitleBar />
    <Ribbon />
    <main className="relative flex min-h-0 flex-1 flex-col">
      <Model />
      <div className="relative flex min-h-0 flex-1 flex-col">
        <CommandTabs />
        <div className="flex min-h-0 flex-1">
          <FeatureTree />
          <TaskPane />
        </div>
      </div>
    </main>
    <ModelTabs />
    <StatusBar />
    <Taskbar />
  </div>
);

export default App;
